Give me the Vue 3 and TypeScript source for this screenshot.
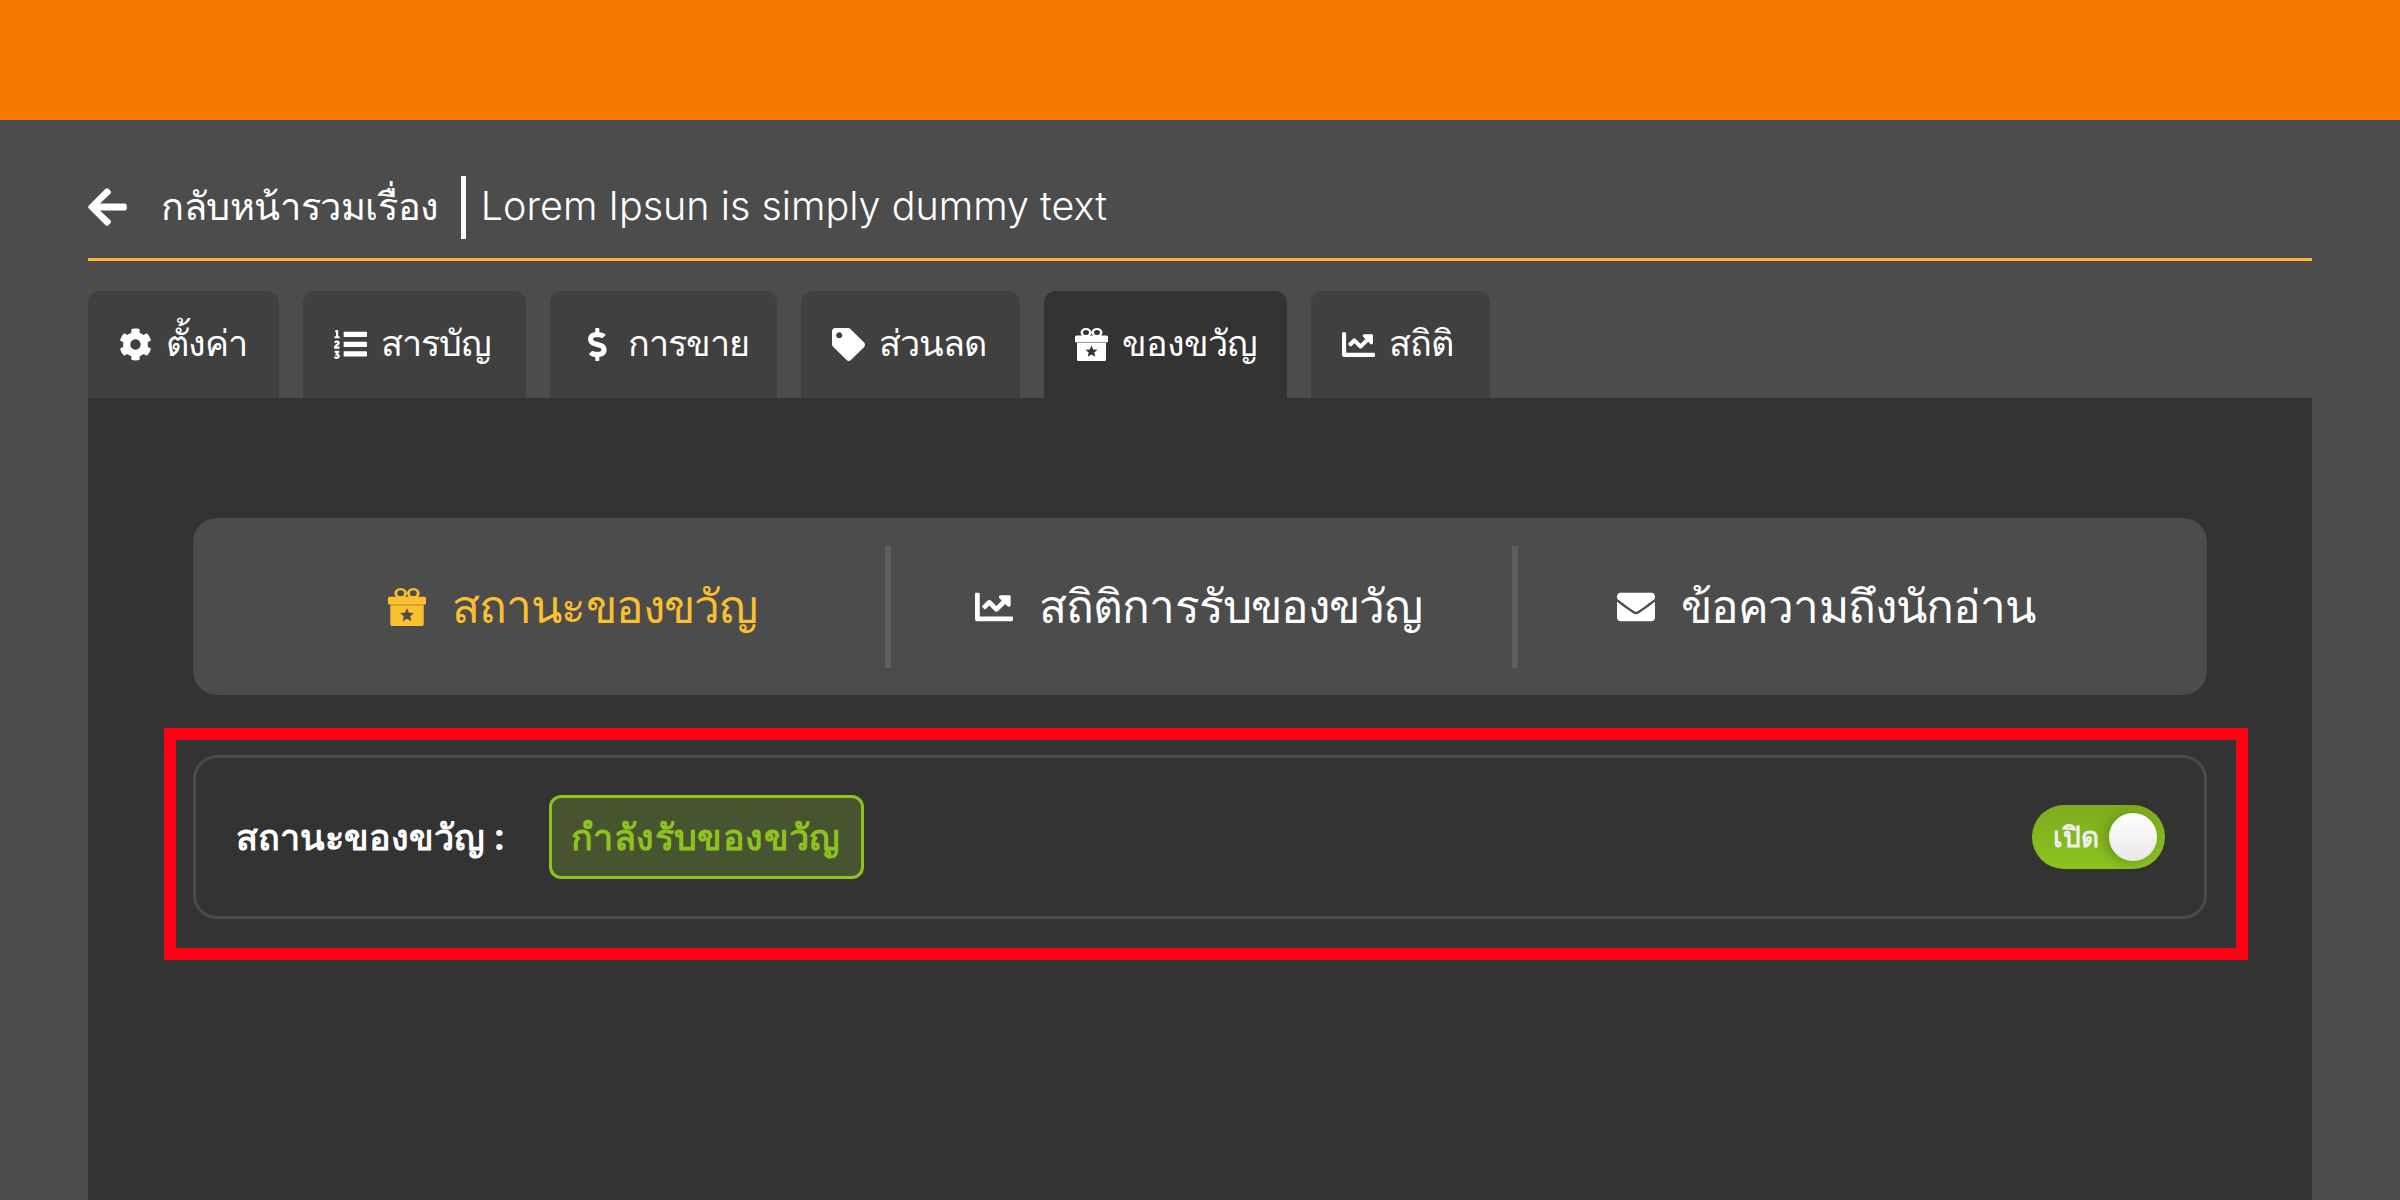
<script setup lang="ts">
import { ref } from "vue";

type IconName = "cog" | "list" | "dollar" | "tag" | "gift" | "chart" | "mail";

const icons: Record<IconName, { box: string; d: string }> = {
  cog: {
    box: "0 0 512 512",
    d: "M487.4 315.7l-42.6-24.6c4.3-23.2 4.3-47 0-70.2l42.6-24.6c4.9-2.8 7.1-8.6 5.5-14-11.1-35.6-30-67.8-54.7-94.6-3.8-4.1-10-5.1-14.8-2.3L380.8 110c-17.9-15.4-38.5-27.3-60.8-35.1V25.8c0-5.6-3.9-10.5-9.4-11.7-36.7-8.2-74.3-7.8-109.2 0-5.5 1.2-9.4 6.1-9.4 11.7V75c-22.2 7.9-42.8 19.8-60.8 35.1L88.7 85.5c-4.9-2.8-11-1.9-14.8 2.3-24.7 26.7-43.6 58.9-54.7 94.6-1.7 5.4.6 11.2 5.5 14L67.3 221c-4.3 23.2-4.3 47 0 70.2l-42.6 24.6c-4.9 2.8-7.1 8.6-5.5 14 11.1 35.6 30 67.8 54.7 94.6 3.8 4.1 10 5.1 14.8 2.3l42.6-24.6c17.9 15.4 38.5 27.3 60.8 35.1v49.2c0 5.6 3.9 10.5 9.4 11.7 36.7 8.2 74.3 7.8 109.2 0 5.5-1.2 9.4-6.1 9.4-11.7v-49.2c22.2-7.9 42.8-19.8 60.8-35.1l42.6 24.6c4.9 2.8 11 1.9 14.8-2.3 24.7-26.7 43.6-58.9 54.7-94.6 1.5-5.5-.7-11.3-5.6-14.1zM256 336c-44.1 0-80-35.9-80-80s35.9-80 80-80 80 35.9 80 80-35.9 80-80 80z",
  },
  list: {
    box: "0 0 512 512",
    d: "M61.77 401l17.5-20.15a19.92 19.92 0 0 0 5.07-14.19v-3.31C84.34 356 80.5 352 73 352H16a8 8 0 0 0-8 8v16a8 8 0 0 0 8 8h22.83a157.41 157.41 0 0 0-11 12.31l-5.61 7c-4 5.07-5.25 10.13-2.8 14.88l1.05 1.93c3 5.76 6.29 7.88 12.25 7.88h4.73c10.33 0 15.94 2.44 15.94 9.09 0 4.72-4.2 8.22-14.36 8.22a41.54 41.54 0 0 1-15.47-3.12c-6.49-3.88-11.74-3.5-15.6 3.12l-5.59 9.31c-3.72 6.13-3.19 11.72 2.63 15.94 7.71 4.69 20.38 9.44 37 9.44 34.16 0 48.5-22.75 48.5-44.12-.03-14.38-9.12-29.76-28.73-34.88zM150 58h346a16 16 0 0 1 16 16v50a16 16 0 0 1-16 16H150zM150 212h346a16 16 0 0 1 16 16v50a16 16 0 0 1-16 16H150zM150 362h346a16 16 0 0 1 16 16v50a16 16 0 0 1-16 16H150zM16 160h64a8 8 0 0 0 8-8v-16a8 8 0 0 0-8-8H64V40a8 8 0 0 0-8-8H32a8 8 0 0 0-7.14 4.42l-8 16A8 8 0 0 0 24 64h8v64H16a8 8 0 0 0-8 8v16a8 8 0 0 0 8 8zm-3.91 160H80a8 8 0 0 0 8-8v-16a8 8 0 0 0-8-8H41.32c3.29-10.29 48.34-18.68 48.34-56.44 0-29.06-25-39.56-44.47-39.56-21.36 0-33.8 10-40.46 18.75-4.37 5.59-3 10.84 2.8 15.37l8.58 6.88c5.61 4.56 11 2.47 16.12-2.44a13.44 13.44 0 0 1 9.46-3.84c3.33 0 9.28 1.56 9.28 8.75C51 248.19 0 257.31 0 304.59v4C0 316 5.08 320 12.09 320z",
  },
  dollar: {
    box: "0 0 288 512",
    d: "M209.2 233.4l-108-31.6C88.7 198.2 80 186.5 80 173.5c0-16.3 13.2-29.5 29.5-29.5h66.3c12.2 0 24.2 3.7 34.2 10.5 6.1 4.1 14.3 3.1 19.5-2l34.8-34c7.1-6.9 6.1-18.4-1.8-24.5C238 74.8 207.4 64.1 176 64V16c0-8.8-7.2-16-16-16h-32c-8.8 0-16 7.2-16 16v48h-2.5C45.8 64-5.4 118.7.5 183.6c4.2 46.1 39.4 83.6 83.8 96.6l102.5 30c12.5 3.7 21.2 15.3 21.2 28.3 0 16.3-13.2 29.5-29.5 29.5h-66.3C100 368 88 364.3 78 357.5c-6.1-4.1-14.3-3.1-19.5 2l-34.8 34c-7.1 6.9-6.1 18.4 1.8 24.5 24.5 19.2 55.1 29.9 86.5 30v48c0 8.8 7.2 16 16 16h32c8.8 0 16-7.2 16-16v-48.2c46.6-.9 90.3-28.6 105.7-72.7 21.5-61.6-14.6-124.8-72.5-141.7z",
  },
  tag: {
    box: "0 0 512 512",
    d: "M0 252.118V48C0 21.49 21.49 0 48 0h204.118a48 48 0 0 1 33.941 14.059l211.882 211.882c18.745 18.745 18.745 49.137 0 67.882L293.823 497.941c-18.745 18.745-49.137 18.745-67.882 0L14.059 286.059A48 48 0 0 1 0 252.118zM112 64c-26.51 0-48 21.49-48 48s21.49 48 48 48 48-21.49 48-48-21.49-48-48-48z",
  },
  gift: {
    box: "0 0 33 33",
    d: "M5.5 4.5a5.5 4.5 0 1 1 11 0a5.5 4.5 0 1 1-11 0zM8 4.5a3 2.5 0 1 0 6 0a3 2.5 0 1 0-6 0zM16.5 4.5a5.5 4.5 0 1 1 11 0a5.5 4.5 0 1 1-11 0zM19 4.5a3 2.5 0 1 0 6 0a3 2.5 0 1 0-6 0zM1.5 7.5h30a1.5 1.5 0 0 1 1.5 1.5v4a1.5 1.5 0 0 1-1.5 1.5h-30a1.5 1.5 0 0 1-1.5-1.5v-4a1.5 1.5 0 0 1 1.5-1.5zM2 15h29v16.5a1.5 1.5 0 0 1-1.5 1.5h-26a1.5 1.5 0 0 1-1.5-1.5zM16.5 17.5l-1.7 3.9-4.3.4 3.2 2.8-1 4.2 3.8-2.2 3.8 2.2-1-4.2 3.2-2.8-4.3-.4z",
  },
  chart: {
    box: "0 0 512 512",
    d: "M496 384H64V80c0-8.84-7.16-16-16-16H16C7.16 64 0 71.16 0 80v336c0 17.67 14.33 32 32 32h464c8.84 0 16-7.16 16-16v-32c0-8.84-7.16-16-16-16zM464 96H345.94c-21.38 0-32.09 25.85-16.97 40.97l32.4 32.4L288 242.75l-73.37-73.37c-12.5-12.5-32.76-12.5-45.25 0l-68.69 68.69c-6.25 6.25-6.25 16.38 0 22.63l22.62 22.62c6.25 6.25 16.38 6.25 22.63 0L192 237.25l73.37 73.37c12.5 12.5 32.76 12.5 45.25 0l96-96 32.4 32.4c15.12 15.12 40.97 4.41 40.97-16.97V112c.01-8.84-7.15-16-15.99-16z",
  },
  mail: {
    box: "0 0 512 512",
    d: "M502.3 190.8c3.9-3.1 9.7-.2 9.7 4.7V400c0 26.5-21.5 48-48 48H48c-26.5 0-48-21.5-48-48V195.6c0-5 5.7-7.8 9.7-4.7 22.4 17.4 52.1 39.5 154.1 113.6 21.1 15.4 56.7 47.8 92.2 47.6 35.7.3 72-32.8 92.3-47.6 102-74.1 131.6-96.3 154-113.7zM256 320c23.2.4 56.6-29.2 73.4-41.4 132.7-96.3 142.8-104.7 173.4-128.7 5.8-4.5 9.2-11.5 9.2-18.9v-19c0-26.5-21.5-48-48-48H48C21.5 64 0 85.5 0 112v19c0 7.4 3.4 14.3 9.2 18.9 30.6 23.9 40.7 32.4 173.4 128.7 16.8 12.2 50.2 41.8 73.4 41.4z",
  },
};

const tabs: { label: string; icon: IconName; width: number; active?: boolean }[] = [
  { label: "ตั้งค่า", icon: "cog", width: 191 },
  { label: "สารบัญ", icon: "list", width: 223 },
  { label: "การขาย", icon: "dollar", width: 227 },
  { label: "ส่วนลด", icon: "tag", width: 219 },
  { label: "ของขวัญ", icon: "gift", width: 243, active: true },
  { label: "สถิติ", icon: "chart", width: 179 },
];

const sections: { label: string; icon: IconName; active?: boolean }[] = [
  { label: "สถานะของขวัญ", icon: "gift", active: true },
  { label: "สถิติการรับของขวัญ", icon: "chart" },
  { label: "ข้อความถึงนักอ่าน", icon: "mail" },
];

const enabled = ref(true);
</script>

<template>
  <div class="page">
    <header class="topbar"></header>
    <main class="wrap">
      <div class="crumb">
        <svg class="back" viewBox="0 0 448 512"><path d="M257.5 445.1l-22.2 22.2c-9.4 9.4-24.6 9.4-33.9 0L7 273c-9.4-9.4-9.4-24.6 0-33.9L201.4 44.7c9.4-9.4 24.6-9.4 33.9 0l22.2 22.2c9.5 9.5 9.3 25-.4 34.3L136.6 216H424c13.3 0 24 10.7 24 24v32c0 13.3-10.7 24-24 24H136.6l120.5 114.8c9.8 9.3 10 24.8.4 34.3z" /></svg>
        <span class="crumb-back">กลับหน้ารวมเรื่อง</span>
        <i class="crumb-sep"></i>
        <span class="crumb-title">Lorem Ipsun is simply dummy text</span>
      </div>

      <nav class="tabs">
        <div
          v-for="t in tabs"
          :key="t.label"
          class="tab"
          :class="{ active: t.active }"
          :style="{ width: t.width + 'px' }"
        >
          <span class="tab-icon"><svg :viewBox="icons[t.icon].box"><path :d="icons[t.icon].d" /></svg></span>
          <span class="tab-label">{{ t.label }}</span>
        </div>
      </nav>

      <section class="content">
        <div class="sections">
          <div v-for="s in sections" :key="s.label" class="section" :class="{ active: s.active }">
            <svg class="section-icon" :viewBox="icons[s.icon].box"><path :d="icons[s.icon].d" /></svg>
            <span>{{ s.label }}</span>
          </div>
        </div>

        <div class="highlight">
          <div class="status">
            <span class="status-label">สถานะของขวัญ :</span>
            <span class="status-badge">กำลังรับของขวัญ</span>
            <button class="switch" :class="{ on: enabled }" @click="enabled = !enabled">
              <span class="switch-text">เปิด</span>
              <i class="knob"></i>
            </button>
          </div>
        </div>
      </section>
    </main>
  </div>
</template>

<style scoped>
* {
  box-sizing: border-box;
}

.page {
  display: flex;
  flex-direction: column;
  height: 1200px;
  overflow: hidden;
  background: #4c4c4c;
  color: #fff;
  font-family: "Noto Sans", "Open Sans", sans-serif;
}

.topbar {
  flex: none;
  height: 120px;
  background: #f37a00;
}

.wrap {
  display: flex;
  flex: 1;
  flex-direction: column;
  min-height: 0;
  padding: 0 88px;
}

.crumb {
  display: flex;
  align-items: center;
  height: 141px;
  padding-top: 36px;
  border-bottom: 3px solid #fbb62c;
  font-size: 38px;
}

.back {
  flex: none;
  width: 39px;
  height: 44px;
  margin-right: 34px;
  fill: #fff;
}

.crumb-back {
  margin-bottom: 2px;
  letter-spacing: -0.4px;
}

.crumb-sep {
  flex: none;
  width: 5px;
  height: 63px;
  margin: 0 15px 0 22px;
  background: #fff;
}

.crumb-title {
  margin-bottom: 2px;
  font-family: Inter, "Noto Sans", sans-serif;
  font-size: 39.5px;
  font-weight: 300;
}

.tabs {
  display: flex;
  gap: 24px;
  margin-top: 30px;
}

.tab {
  display: flex;
  align-items: center;
  gap: 14px;
  height: 107px;
  padding-left: 31px;
  border-radius: 12px 12px 0 0;
  background: #404040;
  font-size: 36px;
  letter-spacing: -1px;
}

.tab-label {
  margin-bottom: 2px;
}

.tab.active {
  background: #333;
}

.tab-icon {
  display: flex;
  flex: none;
  justify-content: center;
  width: 33px;
  height: 33px;
}

.tab-icon svg {
  height: 100%;
  fill: #fff;
}

.content {
  flex: 1;
  padding: 120px 105px 0;
  background: #333;
}

.sections {
  display: grid;
  grid-template-columns: 698px 627px 689px;
  align-items: center;
  height: 177px;
  border-radius: 24px;
  background: #4c4c4c;
  font-size: 46px;
  letter-spacing: -0.9px;
}

.section {
  display: flex;
  align-items: center;
  gap: 26px;
  height: 122px;
  padding-left: 84px;
  border-right: 6px solid #5e5e5e;
}

.section:first-child {
  padding-left: 195px;
}

.section:last-child {
  padding-left: 99px;
  border-right: none;
}

.section.active {
  color: #fbc02d;
}

.section-icon {
  flex: none;
  width: 38px;
  height: 38px;
  fill: currentColor;
}

.highlight {
  margin: 33px -41px 0 -29px;
  padding: 15px 29px 29px 17px;
  border: 12px solid #ff0016;
}

.status {
  display: flex;
  align-items: center;
  gap: 45px;
  height: 164px;
  padding: 0 39px 0 40px;
  border: 3px solid #4a4a4a;
  border-radius: 24px;
}

.status-label {
  font-size: 36px;
  font-weight: 700;
}

.status-badge {
  display: flex;
  align-items: center;
  height: 84px;
  padding: 0 20px 0 19px;
  border: 3px solid #8cc31e;
  border-radius: 12px;
  background: #485330;
  color: #8cc31e;
  font-size: 36px;
  font-weight: 700;
  letter-spacing: 0.4px;
}

.switch {
  display: flex;
  align-items: center;
  justify-content: space-between;
  width: 133px;
  height: 64px;
  margin-left: auto;
  padding: 0 8px 0 21px;
  border: none;
  border-radius: 32px;
  background: linear-gradient(180deg, #7dab1e 0%, #8cc31e 100%);
  color: #eee;
  font: inherit;
  font-size: 28px;
  font-weight: 600;
  cursor: pointer;
}

.knob {
  width: 48px;
  height: 48px;
  border-radius: 50%;
  background: linear-gradient(180deg, #fff 0%, #e8e8e8 100%);
  box-shadow: -4px 2px 12px rgba(0, 0, 0, 0.2);
}
</style>
